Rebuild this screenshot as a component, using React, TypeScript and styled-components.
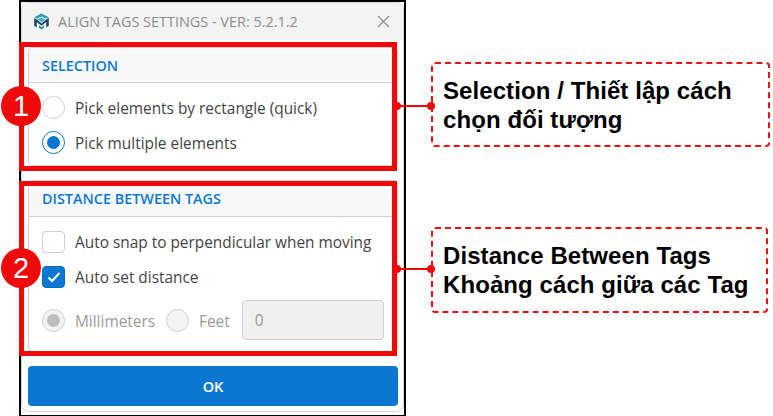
import React from "react";
import styled, { createGlobalStyle } from "styled-components";

const Global = createGlobalStyle`
  html, body { margin: 0; padding: 0; background: #fff; }
  * { box-sizing: border-box; }
`;

const Page = styled.div`
  position: relative;
  width: 773px;
  height: 416px;
  overflow: hidden;
  background: #fff;
  display: flex;
  padding-left: 19px;
  font-family: "Open Sans", "Noto Sans", sans-serif;
`;

const WindowFrame = styled.div`
  width: 387px;
  height: 416px;
  flex: none;
  border: 2px solid #000;
  border-bottom-width: 1px;
  background: #fff;
`;

const DialogPanel = styled.div`
  height: 410px;
  border: 1px solid #d4d4d4;
  border-radius: 8px;
  background: #fff;
  overflow: hidden;
  display: flex;
  flex-direction: column;
`;

const TitleBar = styled.div`
  height: 37px;
  flex: none;
  background: #f3f3f3;
  display: flex;
  align-items: center;
  padding: 0 13px 0 11px;
  gap: 8px;
`;

const TitleText = styled.span`
  flex: 1;
  font-size: 14.44px;
  color: #8c8c8c;
  white-space: nowrap;
`;

const CloseIcon = styled.svg`
  width: 13px;
  height: 13px;
  flex: none;
`;

const Content = styled.div`
  flex: 1;
  padding: 7px 5px 6px 6px;
  display: flex;
  flex-direction: column;
  gap: 14px;
`;

const Card = styled.section<{ $height: number }>`
  height: ${(p) => p.$height}px;
  flex: none;
  border: 1px solid #cfcfcf;
  border-radius: 4px;
  overflow: hidden;
`;

const CardHeader = styled.header<{ $h: number }>`
  height: ${(p) => p.$h}px;
  background: #f9f9f9;
  border-bottom: 1px solid #cfcfcf;
  display: flex;
  align-items: center;
  padding-left: 13px;
  font-size: 14.4px;
  font-weight: 600;
  color: #0a78d2;
`;

const CardBody = styled.div`
  padding: 13px 13px 0 13px;
  display: flex;
  flex-direction: column;
  gap: 12px;
`;

const Row = styled.div`
  display: flex;
  align-items: center;
  height: 23px;
  gap: 10px;
  font-size: 15.4px;
  color: #444;
  white-space: nowrap;
`;

const RowLabel = styled.span`
  padding-top: 2px;
`;

const Radio = styled.span<{ $checked?: boolean; $disabled?: boolean }>`
  width: 23px;
  height: 23px;
  flex: none;
  border-radius: 50%;
  border: 1px solid ${(p) => (p.$disabled ? "#cfcfcf" : p.$checked ? "#0a78d2" : "#cfcfcf")};
  background: ${(p) => (p.$disabled ? "#f3f3f3" : "#fff")};
  display: flex;
  align-items: center;
  justify-content: center;
  &::after {
    content: "";
    display: ${(p) => (p.$checked ? "block" : "none")};
    width: 13px;
    height: 13px;
    border-radius: 50%;
    background: ${(p) => (p.$disabled ? "#bdbdbd" : "#0a78d2")};
  }
`;

const CheckBox = styled.span<{ $checked?: boolean }>`
  width: 23px;
  height: 22px;
  flex: none;
  border-radius: 4px;
  border: 1px solid ${(p) => (p.$checked ? "#0a6cbd" : "#cfcfcf")};
  background: ${(p) => (p.$checked ? "#0a78d2" : "#fff")};
  display: flex;
  align-items: center;
  justify-content: center;
`;

const UnitRow = styled.div`
  display: flex;
  align-items: center;
  height: 40px;
  font-size: 15.4px;
  color: #9a9a9a;
  white-space: nowrap;
`;

const UnitLabel = styled.span<{ $mr: number }>`
  margin-left: 10px;
  margin-right: ${(p) => p.$mr}px;
  padding-top: 2px;
`;

const ValueBox = styled.div`
  width: 142px;
  height: 40px;
  flex: none;
  background: #f0f0f0;
  border: 1px solid #d0d0d0;
  border-radius: 4px;
  display: flex;
  align-items: center;
  padding-left: 12px;
  font-size: 15.4px;
  color: #9a9a9a;
`;

const OkButton = styled.button`
  height: 40px;
  flex: none;
  border: none;
  border-radius: 4px;
  background: #0a78d0;
  color: #fff;
  font-family: inherit;
  font-size: 14.5px;
  font-weight: 600;
`;

const Callouts = styled.aside`
  flex: 1;
  display: flex;
  flex-direction: column;
  padding: 62px 3px 0 25px;
  gap: 80px;
`;

const Callout = styled.div<{ $mr: number; $h: number }>`
  height: ${(p) => p.$h}px;
  margin-right: ${(p) => p.$mr}px;
  border: 2.5px dashed #ee1111;
  border-radius: 4px;
  padding-left: 10px;
  display: flex;
  flex-direction: column;
  justify-content: center;
  font-family: "Liberation Sans", Arial, sans-serif;
  font-weight: 700;
  font-size: 24px;
  line-height: 29px;
  color: #000;
  letter-spacing: 0.08px;
  white-space: nowrap;
`;

const RedFrame = styled.div<{ $top: number; $h: number }>`
  position: absolute;
  left: 19px;
  top: ${(p) => p.$top}px;
  width: 378px;
  height: ${(p) => p.$h}px;
  border: 5px solid #ee0a0a;
  pointer-events: none;
`;

const Badge = styled.div<{ $top: number }>`
  position: absolute;
  left: 1px;
  top: ${(p) => p.$top}px;
  width: 40px;
  height: 40px;
  border-radius: 50%;
  background: #ee0a0a;
  color: #fff;
  font-family: "Liberation Sans", Arial, sans-serif;
  font-size: 29px;
  display: flex;
  align-items: center;
  justify-content: center;
`;

const Leader = styled.div<{ $top: number }>`
  position: absolute;
  left: 397px;
  top: ${(p) => p.$top}px;
  width: 34px;
  height: 2px;
  background: #ee0a0a;
  &::before, &::after {
    content: "";
    position: absolute;
    top: -3px;
    width: 8px;
    height: 8px;
    border-radius: 50%;
    background: #ee0a0a;
  }
  &::before { left: -4px; }
  &::after { right: -4px; }
`;

const Logo = () => (
  <svg width="17" height="17" viewBox="0 0 17 17" style={{ flex: "none" }}>
    <path d="M8.5 0.5 L15.8 4.2 L13 5.6 L8.5 3.4 L4 5.6 L1.2 4.2 Z" fill="#2f9ab8" />
    <path d="M4.6 6.6 L8.5 4.6 L12.4 6.6 L8.5 9.6 Z" fill="#46b3cc" />
    <path d="M1.2 5 L3.9 6.4 L8.5 10.4 L13.1 6.4 L15.8 5 V12.8 L13.2 14.4 V9 L8.5 12.8 L3.8 9 V14.4 L1.2 12.8 Z" fill="#1c4a66" />
    <path d="M6 12.2 L8.5 14.2 L11 12.2 V14.8 L8.5 16.4 L6 14.8 Z" fill="#2f86a4" />
  </svg>
);

export default function App() {
  return (
    <Page>
      <Global />
      <WindowFrame>
        <DialogPanel>
          <TitleBar>
            <Logo />
            <TitleText>ALIGN TAGS SETTINGS - VER: 5.2.1.2</TitleText>
            <CloseIcon viewBox="0 0 13 13">
              <path d="M1 1 L12 12 M12 1 L1 12" stroke="#8a8a8a" strokeWidth="1.1" fill="none" />
            </CloseIcon>
          </TitleBar>
          <Content>
            <Card $height={119}>
              <CardHeader $h={35}>SELECTION</CardHeader>
              <CardBody>
                <Row><Radio /><RowLabel>Pick elements by rectangle (quick)</RowLabel></Row>
                <Row><Radio $checked /><RowLabel>Pick multiple elements</RowLabel></Row>
              </CardBody>
            </Card>
            <Card $height={172}>
              <CardHeader $h={36}>DISTANCE BETWEEN TAGS</CardHeader>
              <CardBody>
                <Row><CheckBox /><RowLabel>Auto snap to perpendicular when moving</RowLabel></Row>
                <Row>
                  <CheckBox $checked>
                    <svg width="14" height="12" viewBox="0 0 14 12">
                      <path d="M1.5 6.5 L5 10 L12.5 2" stroke="#fff" strokeWidth="2" fill="none" />
                    </svg>
                  </CheckBox>
                  <RowLabel>Auto set distance</RowLabel>
                </Row>
                <UnitRow>
                  <Radio $checked $disabled />
                  <UnitLabel $mr={11}>Millimeters</UnitLabel>
                  <Radio $disabled />
                  <UnitLabel $mr={12}>Feet</UnitLabel>
                  <ValueBox>0</ValueBox>
                </UnitRow>
              </CardBody>
            </Card>
            <OkButton>OK</OkButton>
          </Content>
        </DialogPanel>
      </WindowFrame>
      <Callouts>
        <Callout $mr={0} $h={85}>
          <span>Selection / Thiết lập cách</span>
          <span>chọn đối tượng</span>
        </Callout>
        <Callout $mr={2} $h={86}>
          <span>Distance Between Tags</span>
          <span>Khoảng cách giữa các Tag</span>
        </Callout>
      </Callouts>
      <RedFrame $top={42} $h={129} />
      <RedFrame $top={181} $h={175} />
      <Badge $top={86}>1</Badge>
      <Badge $top={248}>2</Badge>
      <Leader $top={105} />
      <Leader $top={268} />
    </Page>
  );
}
